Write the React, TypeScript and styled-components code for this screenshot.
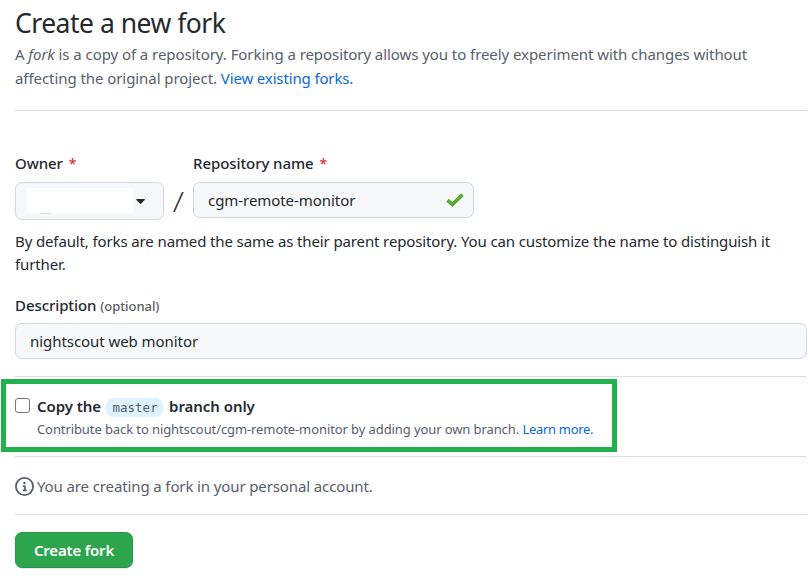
import React from "react";
import styled, { createGlobalStyle } from "styled-components";

const GlobalStyle = createGlobalStyle`
  *, *::before, *::after { box-sizing: border-box; }
  body {
    margin: 0;
    background: #fff;
    color: #24292f;
    font-family: "Noto Sans", "Open Sans", sans-serif;
    font-size: 15px;
    line-height: 20px;
  }
`;

const Page = styled.main`
  display: flex;
  flex-direction: column;
  width: 807px;
  height: 584px;
  padding: 5px 0 0 15px;
  overflow: hidden;
  white-space: nowrap;
`;

const Title = styled.h1`
  margin: 0 0 1px;
  font-size: 26.5px;
  line-height: 36px;
  font-weight: 400;
  letter-spacing: -0.5px;
`;

const Intro = styled.p`
  margin: 0;
  line-height: 24px;
  font-weight: 370;
  letter-spacing: -0.065px;
  color: #57606a;
`;

const Link = styled.a<{ $tight?: boolean }>`
  color: #0969da;
  text-decoration: none;
  letter-spacing: ${(p) => (p.$tight ? "-0.3px" : "-0.14px")};
`;

const Rule = styled.hr<{ $top: number }>`
  flex: none;
  width: 100%;
  height: 1px;
  margin: ${(p) => p.$top}px 0 0;
  border: 0;
  background: #d8dee4;
`;

const NameRow = styled.div`
  display: flex;
  align-items: flex-start;
  margin-top: 42px;
`;

const Field = styled.div<{ $width?: number }>`
  display: flex;
  flex-direction: column;
  width: ${(p) => (p.$width ? `${p.$width}px` : "100%")};
`;

const Label = styled.label<{ $gap?: number }>`
  display: block;
  height: 20px;
  margin-bottom: ${(p) => p.$gap ?? 9}px;
  font-weight: 540;
  letter-spacing: -0.08px;
`;

const Required = styled.span`
  margin-left: 6px;
  color: #cf222e;
  font-size: 14px;
  font-weight: 400;
`;

const Optional = styled.small`
  font-size: 13px;
  font-weight: 500;
  letter-spacing: -0.05px;
  color: #57606a;
`;

const OwnerSelect = styled.div`
  display: flex;
  align-items: flex-start;
  height: 38px;
  padding: 5px 0 0 11px;
  border: 1px solid #d2d7de;
  border-radius: 7px;
  background: #f6f8fa;
`;

const OwnerMask = styled.div`
  width: 107px;
  height: 25px;
  background: #fff;
`;

const OwnerTrace = styled.div`
  width: 10px;
  height: 1px;
  margin: 25px 0 0 13px;
  background: #d5d9dd;
`;

const Caret = styled.svg`
  width: 9px;
  height: 5px;
  margin: 11px 0 0 2px;
  fill: #24292f;
`;

const Slash = styled.span`
  width: 29px;
  height: 38px;
  margin-top: 29px;
  text-align: center;
  font-size: 28px;
  line-height: 38px;
  font-weight: 360;
  transform: skewX(-4deg);
`;

const TextInput = styled.div`
  display: flex;
  align-items: center;
  justify-content: space-between;
  height: 36px;
  padding: 0 9px 0 14px;
  border: 1px solid #d0d7de;
  border-radius: 7px;
  background: #f6f8fa;
  font-weight: 380;
  letter-spacing: -0.06px;
`;

const Hint = styled.p`
  margin: 10px 0 19px;
  line-height: 23px;
  font-weight: 380;
  letter-spacing: -0.125px;
`;

const Highlight = styled.section`
  display: flex;
  flex: none;
  align-items: flex-start;
  width: 616px;
  height: 73px;
  margin: 2px 0 0 -14px;
  padding: 12px 0 0 9px;
  border: 5px solid #22b14c;
`;

const Checkbox = styled.span`
  width: 15px;
  height: 15px;
  margin-top: 2px;
  border: 1px solid #767676;
  border-radius: 3px;
  background: #fff;
`;

const Choice = styled.div`
  margin-left: 7px;
`;

const ChoiceTitle = styled.div`
  display: flex;
  height: 20px;
  margin-bottom: 3px;
  font-weight: 560;
  letter-spacing: -0.05px;
`;

const Branch = styled.code`
  width: 57px;
  height: 19px;
  margin: 2px 6px 0 5px;
  padding-left: 1px;
  border-radius: 7px;
  background: #ddf4ff;
  color: #57606a;
  font: 400 12.5px/19px "DejaVu Sans Mono", monospace;
  letter-spacing: 0;
  text-align: center;
`;

const ChoiceNote = styled.div`
  font-size: 13px;
  font-weight: 380;
  letter-spacing: -0.095px;
  color: #57606a;
`;

const Notice = styled.div`
  display: flex;
  margin-top: 19px;
  gap: 3px;
  height: 20px;
  font-weight: 370;
  letter-spacing: -0.12px;
  color: #57606a;
`;

const InfoIcon = styled.svg`
  width: 19px;
  height: 19px;
  margin-top: 1px;
  fill: #57606a;
`;

const CreateButton = styled.button`
  width: 118px;
  height: 36px;
  margin-top: 17px;
  padding: 0;
  border: 1px solid #2a964a;
  border-radius: 7px;
  background: #2da44e;
  box-shadow: 0 1px 0 rgba(27, 31, 36, 0.1);
  color: #fff;
  font: 600 15px/20px "Noto Sans", "Open Sans", sans-serif;
  letter-spacing: -0.2px;
`;

export default function App() {
  return (
    <>
      <GlobalStyle />
      <Page>
        <Title>Create a new fork</Title>
        <Intro>
          A <em>fork</em> is a copy of a repository. Forking a repository allows you to freely
          experiment with changes without
          <br />
          affecting the original project. <Link>View existing forks.</Link>
        </Intro>
        <Rule $top={20} />
        <NameRow>
          <Field $width={149}>
            <Label>
              Owner<Required>*</Required>
            </Label>
            <OwnerSelect>
              <OwnerMask>
                <OwnerTrace />
              </OwnerMask>
              <Caret viewBox="0 0 9 5">
                <path d="M.6 0h7.8c.5 0 .7.5.4.8L5 4.7a.7.7 0 0 1-1 0L.2.8C-.1.5.1 0 .6 0Z" />
              </Caret>
            </OwnerSelect>
          </Field>
          <Slash>/</Slash>
          <Field $width={281}>
            <Label>
              Repository name<Required>*</Required>
            </Label>
            <TextInput>
              cgm-remote-monitor
              <svg width="18" height="14" viewBox="0 0 18 14">
                <path
                  d="M1.5 7.2 6.3 11.6 16.5 1.6"
                  fill="none"
                  stroke="#57ab36"
                  strokeWidth="3.6"
                />
              </svg>
            </TextInput>
          </Field>
        </NameRow>
        <Hint>
          By default, forks are named the same as their parent repository. You can customize the
          name to distinguish it
          <br />
          further.
        </Hint>
        <Field>
          <Label $gap={8}>
            Description <Optional>(optional)</Optional>
          </Label>
          <TextInput>nightscout web monitor</TextInput>
        </Field>
        <Rule $top={17} />
        <Highlight>
          <Checkbox role="checkbox" aria-checked="false" />
          <Choice>
            <ChoiceTitle>
              Copy the <Branch>master</Branch> branch only
            </ChoiceTitle>
            <ChoiceNote>
              Contribute back to nightscout/cgm-remote-monitor by adding your own branch.{" "}
              <Link $tight>Learn more.</Link>
            </ChoiceNote>
          </Choice>
        </Highlight>
        <Rule $top={4} />
        <Notice>
          <InfoIcon viewBox="0 0 16 16">
            <path d="M8 1.5a6.5 6.5 0 1 0 0 13 6.5 6.5 0 0 0 0-13ZM0 8a8 8 0 1 1 16 0A8 8 0 0 1 0 8Zm6.5-.25A.75.75 0 0 1 7.25 7h1a.75.75 0 0 1 .75.75v2.75h.25a.75.75 0 0 1 0 1.5h-2a.75.75 0 0 1 0-1.5h.25v-2h-.25a.75.75 0 0 1-.75-.75ZM8 6a1 1 0 1 1 0-2 1 1 0 0 1 0 2Z" />
          </InfoIcon>
          You are creating a fork in your personal account.
        </Notice>
        <Rule $top={18} />
        <CreateButton type="button">Create fork</CreateButton>
      </Page>
    </>
  );
}
